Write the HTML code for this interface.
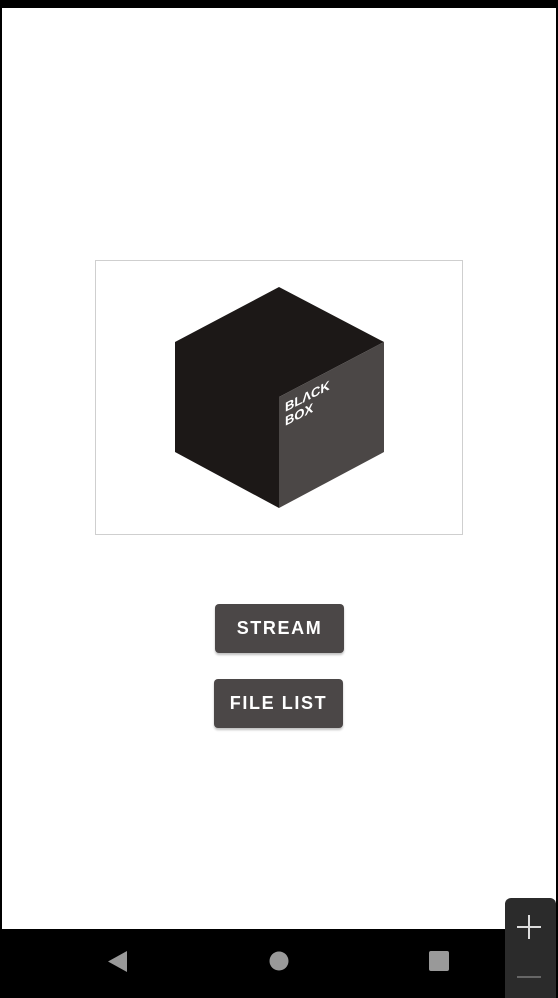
<!DOCTYPE html>
<html><head><meta charset="utf-8"><style>
html,body{margin:0;padding:0}
body{width:558px;height:995px;background:#000;position:relative;overflow:hidden;font-family:"Liberation Sans",sans-serif}
.page{position:absolute;left:2px;top:8px;width:554px;height:921px;background:#fff}
.frame{position:absolute;left:95px;top:260px;width:366px;height:273px;border:1px solid #cfcfcf;background:#fff}
.btn{position:absolute;width:129px;height:49px;background:#4b4747;border-radius:4px;color:#fff;font-size:18px;font-weight:bold;letter-spacing:1.6px;text-align:center;line-height:49px;box-shadow:0 2px 2px rgba(0,0,0,.25)}
.zoom{position:absolute;left:505px;top:898px;width:51px;height:100px;background:#2b2b2b;border-radius:6px 6px 0 0}
</style></head><body>
<div class="page"></div>
<div class="frame"></div>
<svg style="position:absolute;left:0;top:0" width="558" height="995">
<polygon points="279,287 384,342 279,397 279,508 175,452 175,342" fill="#1c1817"/>
<polygon points="279,397 384,342 384,452 279,508" fill="#4b4746"/>
<g transform="translate(285,412) skewY(-27)" fill="#fff" font-family="Liberation Sans,sans-serif" font-size="13" font-weight="bold">
<text x="0" y="0">BLΛCK</text><text x="0" y="14">BOX</text></g>
<polygon points="127,951 127,972 108,961.5" fill="#999"/>
<circle cx="279" cy="961" r="9.5" fill="#999"/>
<rect x="429" y="951" width="20" height="20" rx="2" fill="#999"/>
</svg>
<div class="btn" style="left:215px;top:604px">STREAM</div>
<div class="btn" style="left:214px;top:679px">FILE LIST</div>
<div class="zoom">
<div style="position:absolute;left:12px;top:28px;width:24px;height:2px;background:#ddd"></div>
<div style="position:absolute;left:23px;top:17px;width:2px;height:24px;background:#ddd"></div>
<div style="position:absolute;left:12px;top:78px;width:24px;height:2px;background:#666"></div>
</div>
</body></html>
